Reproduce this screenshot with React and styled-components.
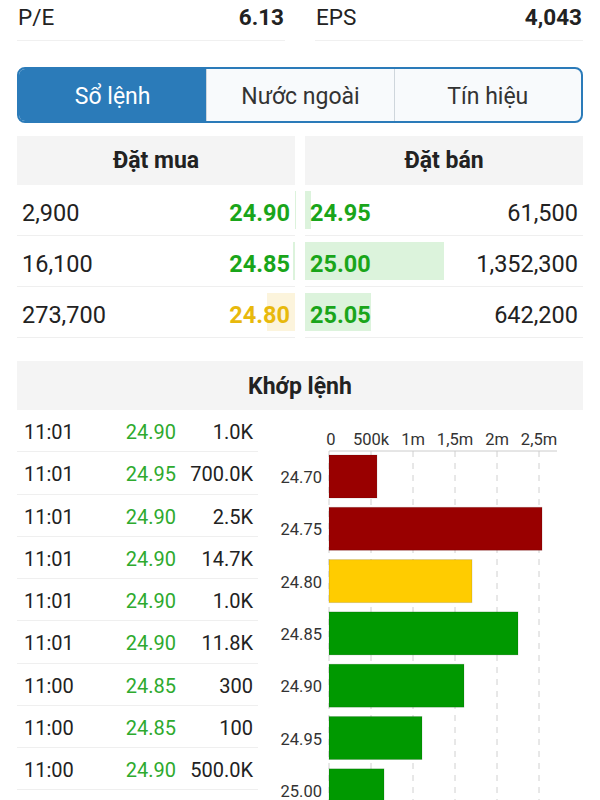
import { useState } from 'react';
import styled, { createGlobalStyle } from 'styled-components';

const GlobalStyle = createGlobalStyle`
  body {
    margin: 0;
    background: #fff;
    font-family: Roboto, "Noto Sans", Arial, sans-serif;
    color: #222;
  }
`;

const Page = styled.div`
  padding: 0 17px;
`;

const StatsRow = styled.div`
  display: grid;
  grid-template-columns: 1fr 1fr;
  column-gap: 30px;
`;

const StatCell = styled.div`
  display: flex;
  justify-content: space-between;
  align-items: center;
  height: 34px;
  padding: 0 1px 6px;
  border-bottom: 1px solid #f0f0f0;
  font-size: 22.5px;
`;

const StatValue = styled.span`
  font-weight: 700;
`;

const Tabs = styled.div`
  display: grid;
  grid-template-columns: repeat(3, 1fr);
  margin-top: 26px;
  height: 52px;
  border: 2px solid #2b7bb9;
  border-radius: 8px;
  overflow: hidden;
  background: #f8fafc;
`;

const Tab = styled.button`
  border: none;
  border-left: ${({ $first }) => ($first ? 'none' : '1px solid #cfd6dc')};
  background: ${({ $active }) => ($active ? '#2b7bb9' : 'transparent')};
  color: ${({ $active }) => ($active ? '#fff' : '#333')};
  font-family: inherit;
  font-size: 23px;
  padding: 3px 0 0;
  cursor: pointer;
`;

const Book = styled.div`
  display: grid;
  grid-template-columns: 1fr 1fr;
  column-gap: 10px;
  margin-top: 13px;
`;

const BookHeader = styled.div`
  height: 49px;
  display: flex;
  align-items: center;
  justify-content: center;
  background: #f4f4f4;
  font-size: 23px;
  font-weight: 700;
`;

const BookRow = styled.div`
  position: relative;
  box-sizing: border-box;
  height: 51px;
  display: flex;
  align-items: center;
  justify-content: space-between;
  padding: 5px 5px 0;
  border-bottom: 1px solid #efefef;
  font-size: 23.5px;
`;

const DepthBar = styled.div`
  position: absolute;
  top: 6px;
  bottom: 6px;
  ${({ $side }) => ($side === 'bid' ? 'right: 0;' : 'left: 0;')}
  background: ${({ $tone }) => ($tone === 'ref' ? '#fcf4dc' : '#dcf3dc')};
`;

const Price = styled.span`
  position: relative;
  font-weight: 700;
  color: ${({ $tone }) => ($tone === 'ref' ? '#e8b90c' : '#1aa51a')};
`;

const Qty = styled.span`
  position: relative;
  color: #222;
`;

const SectionHeader = styled.div`
  margin-top: 23px;
  height: 48px;
  display: flex;
  align-items: center;
  justify-content: center;
  padding-top: 1px;
  background: #f4f4f4;
  font-size: 23px;
  font-weight: 700;
`;

const MatchArea = styled.div`
  display: flex;
  gap: 12px;
`;

const TradeList = styled.div`
  width: 241px;
  flex-shrink: 0;
`;

const TradeRow = styled.div`
  display: grid;
  grid-template-columns: 82px 70px 77px;
  align-items: center;
  box-sizing: border-box;
  height: 42.25px;
  padding: 3px 5px 0 7px;
  border-bottom: 1px solid #efefef;
  font-size: 20px;
  color: #222;
`;

const TradePrice = styled.span`
  text-align: right;
  color: #2eaa2e;
`;

const TradeVol = styled.span`
  text-align: right;
`;

const ChartBox = styled.div`
  flex: 1;
`;

const trades = [
  ['11:01', '24.90', '1.0K'],
  ['11:01', '24.95', '700.0K'],
  ['11:01', '24.90', '2.5K'],
  ['11:01', '24.90', '14.7K'],
  ['11:01', '24.90', '1.0K'],
  ['11:01', '24.90', '11.8K'],
  ['11:00', '24.85', '300'],
  ['11:00', '24.85', '100'],
  ['11:00', '24.90', '500.0K'],
];

const bids = [
  { qty: 2900, price: '24.90' },
  { qty: 16100, price: '24.85' },
  { qty: 273700, price: '24.80', tone: 'ref' },
];

const asks = [
  { qty: 61500, price: '24.95' },
  { qty: 1352300, price: '25.00' },
  { qty: 642200, price: '25.05' },
];

const volumes = [
  { price: '24.70', vol: 571000, color: '#990000' },
  { price: '24.75', vol: 2536000, color: '#990000' },
  { price: '24.80', vol: 1702000, color: '#ffcc00' },
  { price: '24.85', vol: 2250000, color: '#009900' },
  { price: '24.90', vol: 1607000, color: '#009900' },
  { price: '24.95', vol: 1107000, color: '#009900' },
  { price: '25.00', vol: 655000, color: '#009900' },
];

const fmt = (n) => n.toLocaleString('en-US');

function VolumeChart() {
  const x0 = 59;
  const perMil = 84;
  const axisY = 41;
  const ticks = ['0', '500k', '1m', '1,5m', '2m', '2,5m'];
  const height = axisY + 4 + volumes.length * 52.3;
  return (
    <svg width="301" height={height} style={{ display: 'block' }}>
      {ticks.map((t, i) => (
        <g key={t}>
          <line
            x1={x0 + i * 42}
            x2={x0 + i * 42}
            y1={axisY}
            y2={height}
            stroke="#d0d0d0"
            strokeDasharray="6 6"
          />
          <text
            x={x0 + i * 42 + (i === 0 ? 2 : 0)}
            y={axisY - 6}
            textAnchor="middle"
            fontSize="16.5"
            fontFamily="Roboto, sans-serif"
            fill="#333"
          >
            {t}
          </text>
        </g>
      ))}
      <line x1={x0} x2={287} y1={axisY} y2={axisY} stroke="#cccccc" />
      {volumes.map((v, i) => {
        const y = axisY + 4 + i * 52.3;
        return (
          <g key={v.price}>
            <rect
              x={x0}
              y={y}
              width={(v.vol / 1e6) * perMil}
              height={43}
              fill={v.color}
              stroke="rgba(0,0,0,0.12)"
            />
            <text
              x={52}
              y={y + 28}
              textAnchor="end"
              fontSize="16.5"
              fontFamily="Roboto, sans-serif"
              fill="#333"
            >
              {v.price}
            </text>
          </g>
        );
      })}
    </svg>
  );
}

export default function App() {
  const [tab, setTab] = useState(0);
  const maxQty = Math.max(...bids.map((b) => b.qty), ...asks.map((a) => a.qty));

  return (
    <Page>
      <GlobalStyle />
      <StatsRow>
        <StatCell>
          <span>P/E</span>
          <StatValue>6.13</StatValue>
        </StatCell>
        <StatCell>
          <span>EPS</span>
          <StatValue>4,043</StatValue>
        </StatCell>
      </StatsRow>

      <Tabs>
        {['Sổ lệnh', 'Nước ngoài', 'Tín hiệu'].map((label, i) => (
          <Tab key={label} $first={i === 0} $active={tab === i} onClick={() => setTab(i)}>
            {label}
          </Tab>
        ))}
      </Tabs>

      <Book>
        <div>
          <BookHeader>Đặt mua</BookHeader>
          {bids.map((b) => (
            <BookRow key={b.price}>
              <DepthBar $side="bid" $tone={b.tone} style={{ width: `${(b.qty / maxQty) * 50}%` }} />
              <Qty>{fmt(b.qty)}</Qty>
              <Price $tone={b.tone}>{b.price}</Price>
            </BookRow>
          ))}
        </div>
        <div>
          <BookHeader>Đặt bán</BookHeader>
          {asks.map((a) => (
            <BookRow key={a.price}>
              <DepthBar $side="ask" style={{ width: `${(a.qty / maxQty) * 50}%` }} />
              <Price>{a.price}</Price>
              <Qty>{fmt(a.qty)}</Qty>
            </BookRow>
          ))}
        </div>
      </Book>

      <SectionHeader>Khớp lệnh</SectionHeader>
      <MatchArea>
        <TradeList>
          {trades.map((t, i) => (
            <TradeRow key={i}>
              <span>{t[0]}</span>
              <TradePrice>{t[1]}</TradePrice>
              <TradeVol>{t[2]}</TradeVol>
            </TradeRow>
          ))}
        </TradeList>
        <ChartBox>
          <VolumeChart />
        </ChartBox>
      </MatchArea>
    </Page>
  );
}
